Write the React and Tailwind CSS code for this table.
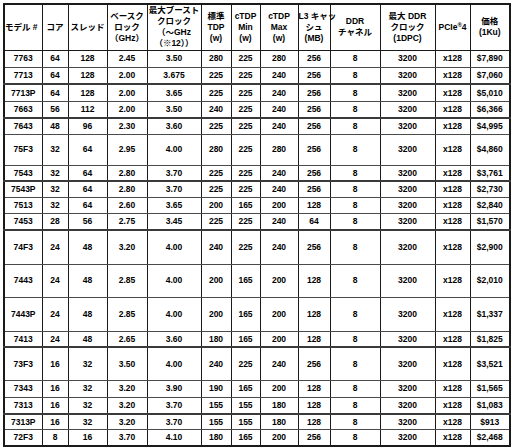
import React from "react";

const colWidths = [
  "w-[38px]", "w-[26px]", "w-[39px]", "w-[40px]", "w-[54px]", "w-[30px]", "w-[29px]",
  "w-[38px]", "w-[32px]", "w-[50px]", "w-[55px]", "w-[35px]", "w-[40px]",
];

const headers = [
  ["モデル #"],
  ["コア"],
  ["スレッド"],
  ["ベースク", "ロック", "（GHz）"],
  ["最大ブースト", "クロック", "（〜GHz", "（※12））"],
  ["標準", "TDP", "(w)"],
  ["cTDP", "Min", "(w)"],
  ["cTDP", "Max", "(w)"],
  ["L3 キャッ", "シュ", "(MB)"],
  ["DDR", "チャネル"],
  ["最大 DDR", "クロック", "(1DPC)"],
  ["PCIe®4"],
  ["価格", "(1Ku)"],
];

// h = row height class, thick = heavier line under the row
const rows = [
  { h: "h-[17px]", d: ["7763", "64", "128", "2.45", "3.50", "280", "225", "280", "256", "8", "3200", "x128", "$7,890"] },
  { h: "h-[17px]", thick: true, d: ["7713", "64", "128", "2.00", "3.675", "225", "225", "240", "256", "8", "3200", "x128", "$7,060"] },
  { h: "h-[17px]", d: ["7713P", "64", "128", "2.00", "3.65", "225", "225", "240", "256", "8", "3200", "x128", "$5,010"] },
  { h: "h-[17px]", thick: true, d: ["7663", "56", "112", "2.00", "3.50", "240", "225", "240", "256", "8", "3200", "x128", "$6,366"] },
  { h: "h-[16px]", d: ["7643", "48", "96", "2.30", "3.60", "225", "225", "240", "256", "8", "3200", "x128", "$4,995"] },
  { h: "h-[31px]", d: ["75F3", "32", "64", "2.95", "4.00", "280", "225", "280", "256", "8", "3200", "x128", "$4,860"] },
  { h: "h-[16px]", thick: true, d: ["7543", "32", "64", "2.80", "3.70", "225", "225", "240", "256", "8", "3200", "x128", "$3,761"] },
  { h: "h-[16px]", d: ["7543P", "32", "64", "2.80", "3.70", "225", "225", "240", "256", "8", "3200", "x128", "$2,730"] },
  { h: "h-[16px]", d: ["7513", "32", "64", "2.60", "3.65", "200", "165", "200", "128", "8", "3200", "x128", "$2,840"] },
  { h: "h-[17px]", thick: true, d: ["7453", "28", "56", "2.75", "3.45", "225", "225", "240", "64", "8", "3200", "x128", "$1,570"] },
  { h: "h-[34px]", d: ["74F3", "24", "48", "3.20", "4.00", "240", "225", "240", "256", "8", "3200", "x128", "$2,900"] },
  { h: "h-[33px]", d: ["7443", "24", "48", "2.85", "4.00", "200", "165", "200", "128", "8", "3200", "x128", "$2,010"] },
  { h: "h-[34px]", d: ["7443P", "24", "48", "2.85", "4.00", "200", "165", "200", "128", "8", "3200", "x128", "$1,337"] },
  { h: "h-[16px]", thick: true, d: ["7413", "24", "48", "2.65", "3.60", "180", "165", "200", "128", "8", "3200", "x128", "$1,825"] },
  { h: "h-[33px]", d: ["73F3", "16", "32", "3.50", "4.00", "240", "225", "240", "256", "8", "3200", "x128", "$3,521"] },
  { h: "h-[17px]", d: ["7343", "16", "32", "3.20", "3.90", "190", "165", "200", "128", "8", "3200", "x128", "$1,565"] },
  { h: "h-[17px]", thick: true, d: ["7313", "16", "32", "3.20", "3.70", "155", "155", "180", "128", "8", "3200", "x128", "$1,083"] },
  { h: "h-[15px]", d: ["7313P", "16", "32", "3.20", "3.70", "155", "155", "180", "128", "8", "3200", "x128", "$913"] },
  { h: "h-[17px]", d: ["72F3", "8", "16", "3.70", "4.10", "180", "165", "200", "256", "8", "3200", "x128", "$2,468"] },
];

const HeaderText = ({ lines }) =>
  lines.map((l, i) => (
    <div key={i} className="whitespace-nowrap">
      {l === "PCIe®4" ? (
        <>
          PCIe<sup className="text-[6px]">®</sup>4
        </>
      ) : (
        l
      )}
    </div>
  ));

export default function App() {
  return (
    <div className="w-[512px] h-[448px] bg-white overflow-hidden pt-[3px] pl-[3px]">
      <table className="w-[507px] table-fixed border-collapse border-2 border-[#1a1a1a] text-black font-bold text-[8.5px] font-['Liberation_Sans','Noto_Sans_CJK_JP',Arial,sans-serif]">
        <colgroup>
          {colWidths.map((w, i) => (
            <col key={i} className={w} />
          ))}
        </colgroup>
        <thead>
          <tr className="h-[46px]">
            {headers.map((h, i) => (
              <th
                key={i}
                className={`border border-[#1a1a1a] p-0 leading-[11px] align-middle font-bold ${
                  i === 0 ? "text-left" : "text-center"
                }`}
              >
                <HeaderText lines={h} />
              </th>
            ))}
          </tr>
        </thead>
        <tbody>
          {rows.map((r, ri) => (
            <tr key={ri} className={r.h}>
              {r.d.map((c, ci) => (
                <td
                  key={ci}
                  className={`border-x border-t border-[#1a1a1a] p-0 text-center align-middle leading-none ${
                    r.thick ? "border-b-2 border-b-[#3a3a3a]" : "border-b border-b-[#4a4a4a]"
                  }`}
                >
                  {c}
                </td>
              ))}
            </tr>
          ))}
        </tbody>
      </table>
    </div>
  );
}
